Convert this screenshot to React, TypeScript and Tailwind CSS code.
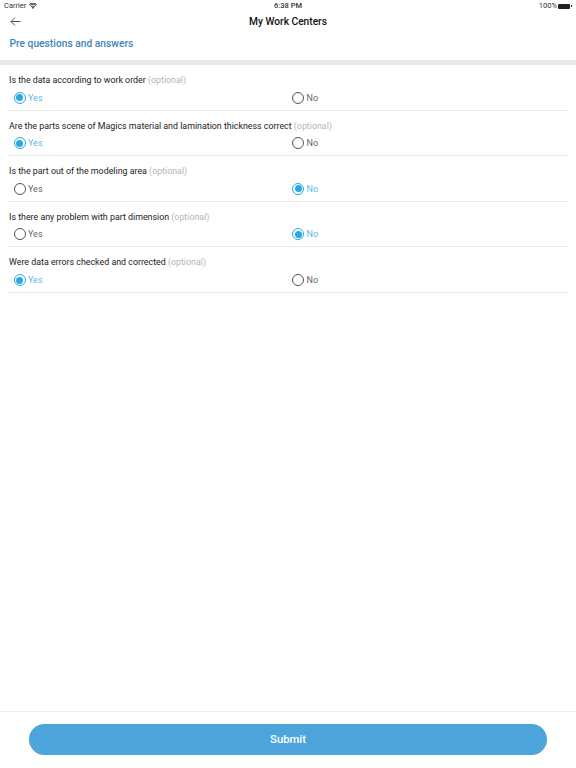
import React from 'react';

const questions = [
  { text: 'Is the data according to work order', answer: 'yes' },
  { text: 'Are the parts scene of Magics material and lamination thickness correct', answer: 'yes' },
  { text: 'Is the part out of the modeling area', answer: 'no' },
  { text: 'Is there any problem with part dimension', answer: 'no' },
  { text: 'Were data errors checked and corrected', answer: 'yes' }
];

const Radio: React.FC<{ label: string; checked: boolean }> = ({ label, checked }) => (
  <div className="flex items-center gap-[2.5px]">
    {checked ? (
      <div className="w-[12px] h-[12px] rounded-full border border-[#29a9e1] flex items-center justify-center">
        <div className="w-[7px] h-[7px] rounded-full bg-[#29a9e1]" />
      </div>
    ) : (
      <div className="w-[12px] h-[12px] rounded-full border border-[#555555]" />
    )}
    <span className={`text-[9px] leading-[12px] ${checked ? 'text-[#5cb8e6]' : 'text-[#666666]'}`}>{label}</span>
  </div>
);

const App: React.FC = () => {
  return (
    <div className="h-[768px] w-[576px] bg-white flex flex-col font-['Roboto',sans-serif] overflow-hidden">
      {/* Status bar */}
      <div className="h-[12px] px-[4px] flex items-center justify-between relative text-[7.5px] text-[#333333]">
        <div className="flex items-center gap-[3px]">
          <span>Carrier</span>
          <svg width="8" height="6" viewBox="0 0 16 12" fill="#333333">
            <path d="M8 12 L5.6 9.2 A3.6 3.6 0 0 1 10.4 9.2 Z" />
            <path d="M3.8 7.2 A6.4 6.4 0 0 1 12.2 7.2 L11.1 8.4 A4.8 4.8 0 0 0 4.9 8.4 Z" />
            <path d="M1.6 4.8 A9.6 9.6 0 0 1 14.4 4.8 L13.3 6 A8 8 0 0 0 2.7 6 Z" />
            <path d="M0 2.8 A12 12 0 0 1 16 2.8 L15 4 A10.5 10.5 0 0 0 1 4 Z" />
          </svg>
        </div>
        <span className="absolute left-0 right-0 text-center font-medium">6:38 PM</span>
        <div className="flex items-center gap-[1px]">
          <span>100%</span>
          <div className="w-[12px] h-[5px] bg-[#222222] rounded-[1px]" />
          <div className="w-[1px] h-[2px] bg-[#222222]" />
        </div>
      </div>

      {/* Nav bar */}
      <div className="h-[19px] px-[10px] flex items-center relative">
        <svg width="11" height="10" viewBox="0 0 11 10" fill="none" stroke="#444444" strokeWidth="0.9" className="-translate-y-[0.5px]">
          <path d="M10.5 5 H1 M5 1 L1 5 L5 9" />
        </svg>
        <span className="absolute left-0 right-0 text-center text-[10.2px] font-medium text-[#111111]">My Work Centers</span>
      </div>

      {/* Section title */}
      <div className="h-[25px] px-[9.5px] flex items-center">
        <span className="text-[10.25px] font-medium text-[#3f86b8]">Pre questions and answers</span>
      </div>
      <div className="h-[4px]" />
      <div className="h-[5px] bg-[#e9e9e9]" />

      {/* Questions */}
      <div className="flex-1 px-[9px]">
        {questions.map((q) => (
          <div key={q.text} className="h-[45.6px] border-b border-[#e8e8e8] flex flex-col">
            <div className="h-[26.7px] pt-[9px] text-[8.85px] leading-[12px] text-[#222222] whitespace-nowrap">
              {q.text} <span className="text-[#b5b5b5]">(optional)</span>
            </div>
            <div className="flex pl-[4.5px]">
              <div className="w-[278.5px]">
                <Radio label="Yes" checked={q.answer === 'yes'} />
              </div>
              <Radio label="No" checked={q.answer === 'no'} />
            </div>
          </div>
        ))}
      </div>

      {/* Footer */}
      <div className="h-[57px] border-t border-[#eeeeee] px-[29px] pt-[12px]">
        <button className="w-full h-[31px] pt-[2px] rounded-[15.5px] bg-[#4ea5db] text-white text-[11.25px] font-medium">
          Submit
        </button>
      </div>
    </div>
  );
};

export default App;
